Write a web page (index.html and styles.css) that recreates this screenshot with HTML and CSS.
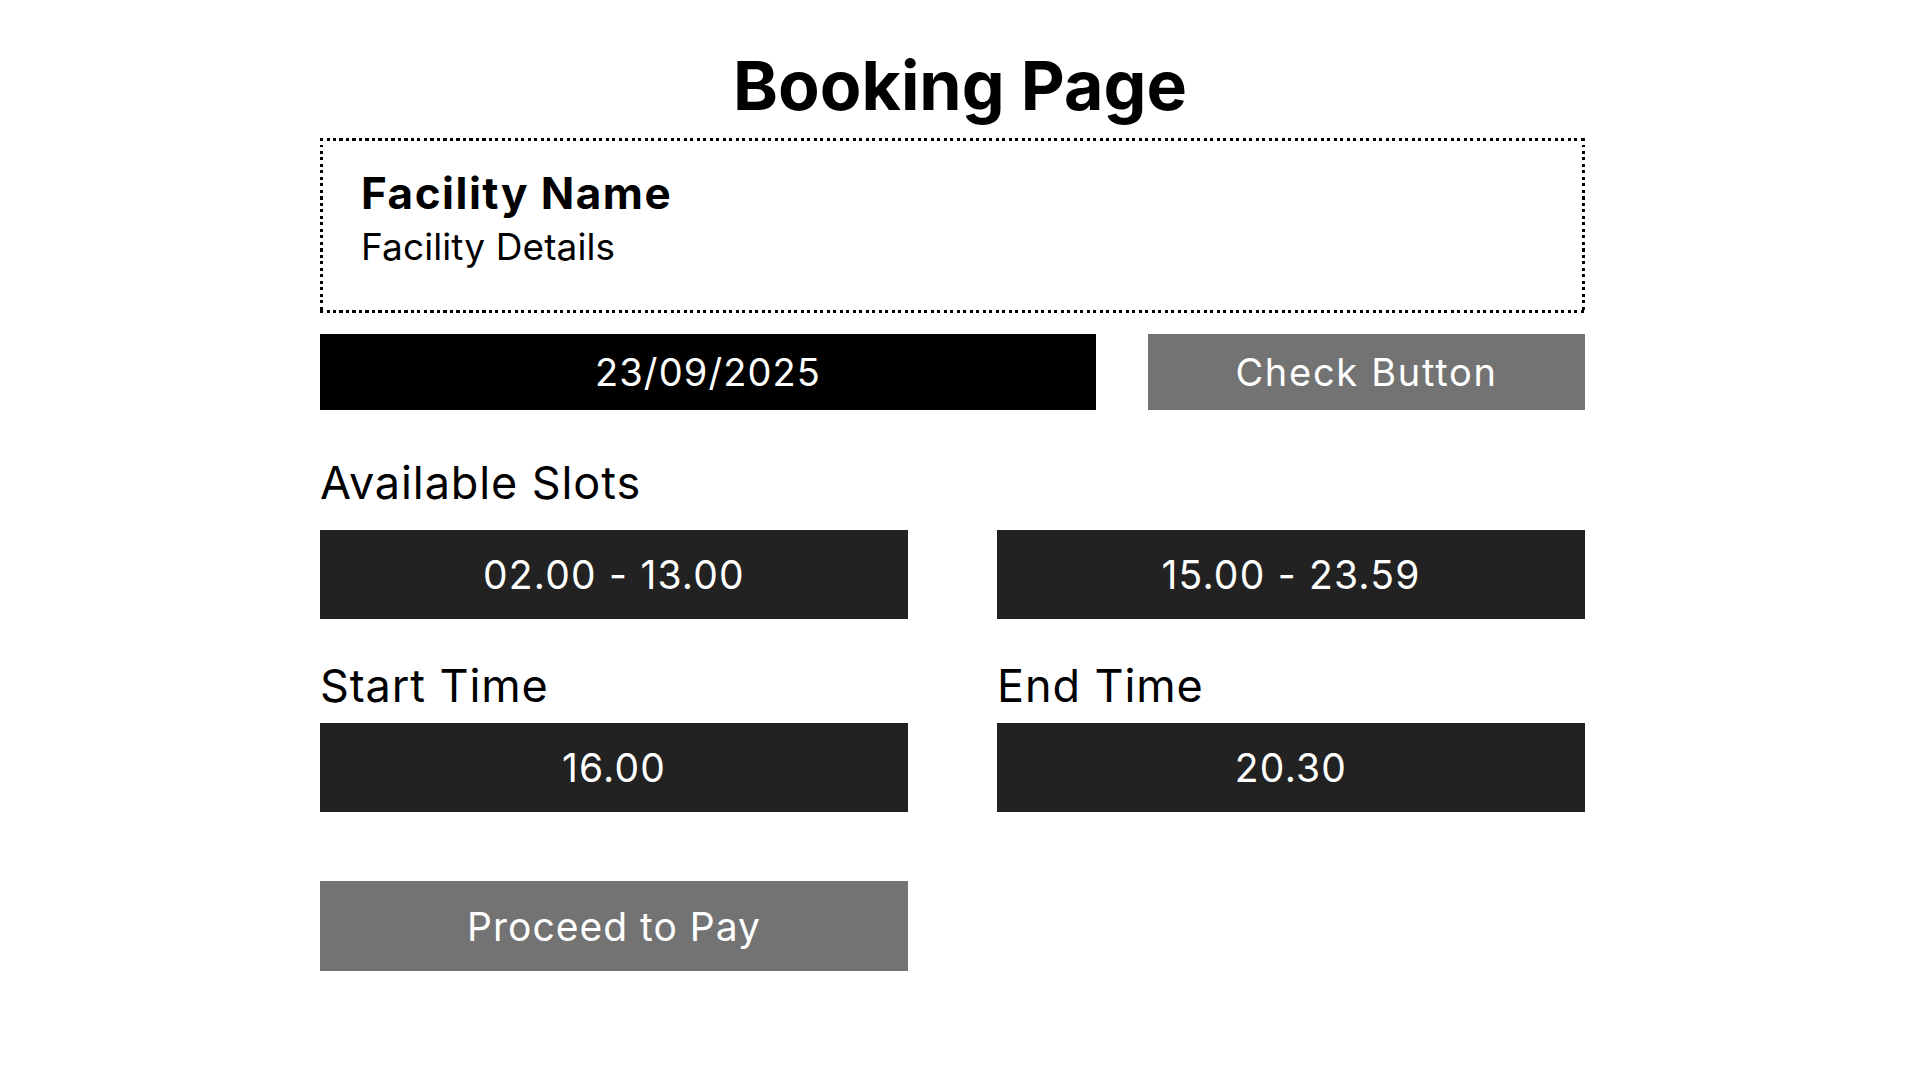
FILE: index.html
```html
<!DOCTYPE html>
<html lang="en">
<head>
<meta charset="utf-8">
<title>Booking Page</title>
<link rel="stylesheet" href="styles.css">
</head>
<body>
  <h1 class="title">Booking Page</h1>
  <main class="page">
    <section class="facility">
      <div class="facility-name">Facility Name</div>
      <div class="facility-details">Facility Details</div>
    </section>

    <div class="date-row">
      <div class="date-field">23/09/2025</div>
      <button class="btn btn-check">Check Button</button>
    </div>

    <div class="label label-slots">Available Slots</div>
    <div class="grid-2 slots">
      <div class="box">02.00 - 13.00</div>
      <div class="box">15.00 - 23.59</div>
    </div>

    <div class="grid-2 time-labels">
      <div class="label">Start Time</div>
      <div class="label">End Time</div>
    </div>
    <div class="grid-2 times">
      <div class="box">16.00</div>
      <div class="box">20.30</div>
    </div>

    <div class="grid-2 pay-row">
      <button class="btn btn-pay">Proceed to Pay</button>
    </div>
  </main>
</body>
</html>
```

FILE: styles.css
```css
* { box-sizing: border-box; }

html, body {
  margin: 0;
  padding: 0;
  background: #ffffff;
}

body {
  width: 1920px;
  height: 1080px;
  font-family: "Inter", "Noto Sans", "Liberation Sans", sans-serif;
  color: #000;
  overflow: hidden;
}

.title {
  margin: 44px 0 12px;
  height: 82px;
  line-height: 82px;
  font-size: 68px;
  font-weight: 700;
  text-align: center;
  letter-spacing: 0;
}

.page {
  margin-left: 320px;
  width: 1265px;
}

.facility {
  height: 175px;
  padding: 29px 0 0 41px;
  background:
    repeating-linear-gradient(90deg, #000 0 3px, transparent 3px 6.5px) left top / 100% 3px no-repeat,
    repeating-linear-gradient(90deg, #000 0 3px, transparent 3px 6.5px) left bottom / 100% 3px no-repeat,
    repeating-linear-gradient(180deg, #000 0 3px, transparent 3px 6.5px) left top / 3px 100% no-repeat,
    repeating-linear-gradient(180deg, #000 0 3px, transparent 3px 6.5px) right top / 3px 100% no-repeat;
}

.facility-name {
  font-size: 44px;
  font-weight: 700;
  line-height: 53px;
  letter-spacing: 1.5px;
}

.facility-details {
  margin-top: 4px;
  font-size: 37px;
  font-weight: 400;
  line-height: 46px;
  letter-spacing: 0.1px;
}

.date-row {
  display: flex;
  gap: 52px;
  margin-top: 21px;
  height: 76px;
}

.date-field {
  flex: 0 0 776px;
  background: #000;
  color: #fff;
  display: flex;
  align-items: center;
  justify-content: center;
  font-size: 38px;
  letter-spacing: 1.1px;
}

.btn {
  border: 0;
  margin: 0;
  padding: 0;
  font-family: inherit;
  color: #fff;
  background: #737373;
  display: flex;
  align-items: center;
  justify-content: center;
  font-size: 38px;
}

.btn-check {
  flex: 1 1 auto;
  letter-spacing: 1.7px;
}

.label {
  font-size: 45px;
  line-height: 54px;
  font-weight: 400;
  letter-spacing: 0.9px;
}

.label-slots {
  margin-top: 46px;
}

.grid-2 {
  display: grid;
  grid-template-columns: 588px 588px;
  column-gap: 89px;
}

.box {
  background: #222222;
  color: #fff;
  display: flex;
  align-items: center;
  justify-content: center;
  font-size: 39px;
  letter-spacing: 1.2px;
}

.slots {
  margin-top: 20px;
  height: 89px;
}

.time-labels {
  margin-top: 40px;
}

.times {
  margin-top: 10px;
  height: 89px;
}

.pay-row {
  margin-top: 69px;
  height: 90px;
}

.btn-pay {
  height: 90px;
  font-size: 39px;
  letter-spacing: 1px;
}
```
